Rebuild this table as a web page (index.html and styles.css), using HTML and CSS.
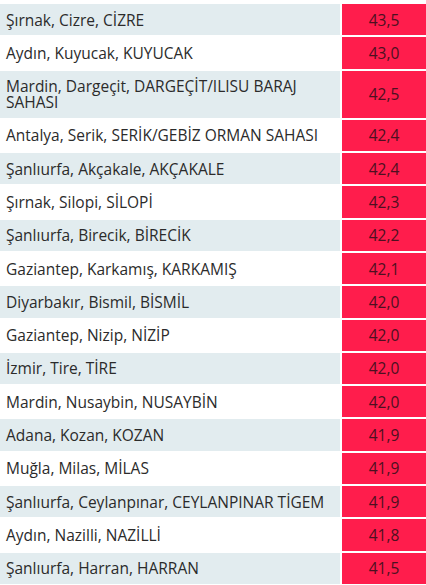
FILE: index.html
```html
<!DOCTYPE html>
<html lang="tr">
<head>
    <meta charset="UTF-8">
    <title>En Yüksek Sıcaklıklar</title>
    <link rel="stylesheet" href="styles.css">
</head>
<body>
    <table class="temps">
        <tbody>
            <tr><td class="place">Şırnak, Cizre, CİZRE</td><td class="value">43,5</td></tr>
            <tr><td class="place">Aydın, Kuyucak, KUYUCAK</td><td class="value">43,0</td></tr>
            <tr><td class="place">Mardin, Dargeçit, DARGEÇİT/ILISU BARAJ SAHASI</td><td class="value">42,5</td></tr>
            <tr><td class="place">Antalya, Serik, SERİK/GEBİZ ORMAN SAHASI</td><td class="value">42,4</td></tr>
            <tr><td class="place">Şanlıurfa, Akçakale, AKÇAKALE</td><td class="value">42,4</td></tr>
            <tr><td class="place">Şırnak, Silopi, SİLOPİ</td><td class="value">42,3</td></tr>
            <tr><td class="place">Şanlıurfa, Birecik, BİRECİK</td><td class="value">42,2</td></tr>
            <tr><td class="place">Gaziantep, Karkamış, KARKAMIŞ</td><td class="value">42,1</td></tr>
            <tr><td class="place">Diyarbakır, Bismil, BİSMİL</td><td class="value">42,0</td></tr>
            <tr><td class="place">Gaziantep, Nizip, NİZİP</td><td class="value">42,0</td></tr>
            <tr><td class="place">İzmir, Tire, TİRE</td><td class="value">42,0</td></tr>
            <tr><td class="place">Mardin, Nusaybin, NUSAYBİN</td><td class="value">42,0</td></tr>
            <tr><td class="place">Adana, Kozan, KOZAN</td><td class="value">41,9</td></tr>
            <tr><td class="place">Muğla, Milas, MİLAS</td><td class="value">41,9</td></tr>
            <tr><td class="place">Şanlıurfa, Ceylanpınar, CEYLANPINAR TİGEM</td><td class="value">41,9</td></tr>
            <tr><td class="place">Aydın, Nazilli, NAZİLLİ</td><td class="value">41,8</td></tr>
            <tr><td class="place">Şanlıurfa, Harran, HARRAN</td><td class="value">41,5</td></tr>
        </tbody>
    </table>
</body>
</html>
```

FILE: styles.css
```css
/* Styles */
html, body {
    overflow: hidden;
}

body {
    font-family: "Open Sans", Arial, sans-serif;
    font-size: 15.5px;
    background-color: #fff;
    color: #2b2b2b;
    margin: 0;
    padding: 0;
}

.temps {
    width: calc(100% + 4px);
    margin: 2px -2px 0 -2px;
    border-spacing: 2px;
    table-layout: fixed;
}

.temps td {
    padding: 7.65px 6px;
    line-height: 16px;
    vertical-align: middle;
}

.temps tr:nth-child(odd) .place {
    background-color: #e2ecef;
}

.temps .place {
    width: 334px;
    padding-right: 0;
}

.temps .value {
    background-color: #ff1d4c;
    color: #4d1020;
    text-align: center;
}
```
